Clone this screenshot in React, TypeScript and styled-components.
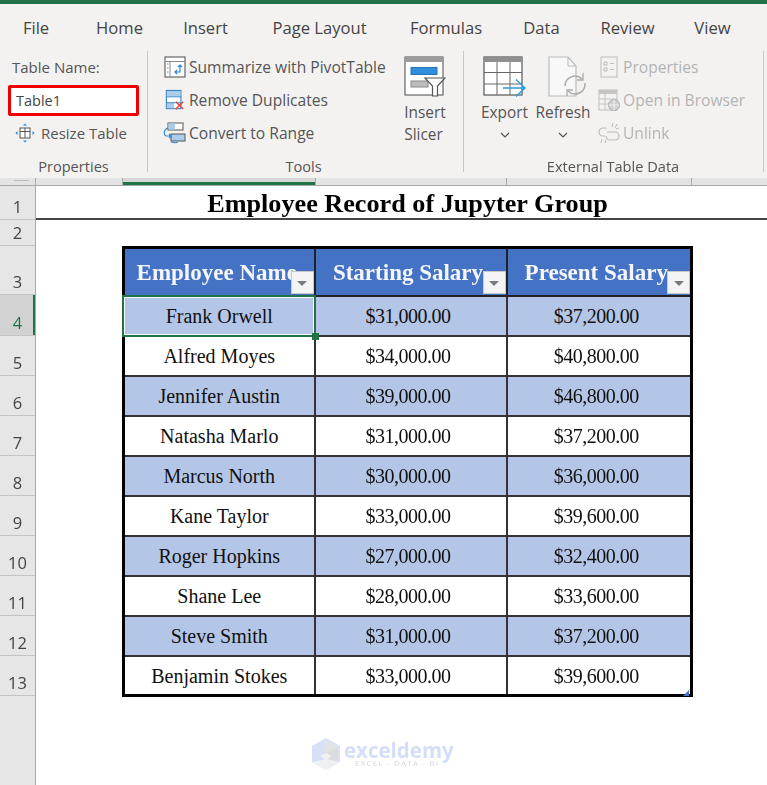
import styled, { createGlobalStyle } from "styled-components";

const GlobalStyle = createGlobalStyle`
  html, body { margin: 0; padding: 0; background: #fff; }
  body { width: 767px; height: 785px; overflow: hidden; font-family: "Open Sans", "Liberation Sans", sans-serif; }
`;

const Page = styled.div`
  width: 767px;
  height: 785px;
  position: relative;
  overflow: hidden;
  display: flex;
  flex-direction: column;
  filter: blur(0.3px);
`;

const Ribbon = styled.div`
  height: 174px;
  border-top: 4px solid #217346;
  background: #f3f2f1;
  flex: none;
`;

const Tabs = styled.div`
  display: flex;
  height: 47px;
  align-items: center;
  font-size: 16.6px;
  color: #444;
`;

const Tab = styled.span<{ $w: number; $before: number }>`
  width: ${(p) => p.$w}px;
  margin-left: ${(p) => p.$before}px;
  white-space: nowrap;
  display: flex;
  justify-content: center;
`;

const Groups = styled.div`
  display: flex;
  height: 127px;
`;

const Group = styled.div<{ $w: number; $pad: number }>`
  width: ${(p) => p.$w}px;
  height: 121px;
  box-sizing: border-box;
  padding-left: ${(p) => p.$pad}px;
  border-right: 1px solid #c8c6c4;
  display: flex;
  flex-direction: column;
  flex: none;
`;

const GroupBody = styled.div`
  display: flex;
  height: 99px;
`;

const GroupLabel = styled.div<{ $shift: number }>`
  margin-left: ${(p) => p.$shift}px;
  height: 22px;
  line-height: 32px;
  text-align: center;
  font-size: 14.6px;
  color: #555;
  white-space: nowrap;
`;

const List = styled.div<{ $w: number; $gap?: number }>`
  width: ${(p) => p.$w}px;
  margin-left: ${(p) => p.$gap ?? 0}px;
  display: flex;
  flex-direction: column;
  flex: none;
`;

const Row = styled.div<{ $off?: boolean }>`
  height: 33px;
  box-sizing: border-box;
  padding-bottom: 1px;
  display: flex;
  align-items: center;
  gap: 3px;
  font-size: 15.6px;
  white-space: nowrap;
  color: ${(p) => (p.$off ? "#b4b4b4" : "#555")};
`;

const IconSlot = styled.span`
  width: 23px;
  flex: none;
  display: flex;
  justify-content: center;
`;

const RibbonIcon = styled.svg`
  flex: none;
  display: block;
`;

const NameLabel = styled.div`
  height: 33px;
  line-height: 32px;
  padding-left: 12px;
  font-size: 15px;
  color: #555;
`;

const NameBox = styled.div`
  width: 131px;
  height: 31px;
  margin: 1px 0 1px 8px;
  box-sizing: border-box;
  border: 3px solid #f00000;
  border-radius: 2px;
  background: #fff;
  padding-left: 5px;
  line-height: 25px;
  font-size: 14.5px;
  color: #444;
`;

const ResizeRow = styled(Row)`
  padding-left: 15px;
  gap: 6px;
  font-size: 15px;
`;

const BigButton = styled.div<{ $w: number }>`
  width: ${(p) => p.$w}px;
  display: flex;
  flex-direction: column;
  align-items: center;
  font-size: 15.4px;
  line-height: 22px;
  color: #555;
  flex: none;
`;

const BigIconSlot = styled.div<{ $nudge?: number }>`
  height: 51px;
  padding-top: 5px;
  margin-left: ${(p) => p.$nudge ?? 0}px;
  box-sizing: border-box;
`;

const Chevron = styled.svg`
  margin-top: 8px;
  display: block;
`;

const ColumnHeaders = styled.div`
  background: #e4e4e4;
  border-bottom: 1px solid #a8a8a8;
  display: flex;
  flex: none;
  height: 7px;
`;

const ColumnHeader = styled.div<{ $w: number; $active?: boolean }>`
  width: ${(p) => p.$w}px;
  box-sizing: border-box;
  border-right: 1px solid #aaa;
  flex: none;
  ${(p) => (p.$active ? "box-shadow: inset 0 -3px 0 #217346; background: #d6d6d6;" : "")}
`;

const CornerHeader = styled(ColumnHeader)`
  display: flex;
  justify-content: flex-end;
  padding: 2px 6px 0 0;
  &::after {
    content: "";
    width: 15px;
    height: 1px;
    background: #bcbcbc;
  }
`;

const Grid = styled.div`
  display: flex;
  flex: 1;
  min-height: 0;
`;

const RowHeaders = styled.div`
  width: 36px;
  flex: none;
  box-sizing: border-box;
  background: #e6e6e6;
  border-right: 1px solid #aaa;
  display: flex;
  flex-direction: column;
`;

const RowHeader = styled.div<{ $h: number; $active?: boolean }>`
  height: ${(p) => p.$h}px;
  box-sizing: border-box;
  flex: none;
  display: flex;
  align-items: flex-end;
  justify-content: center;
  padding-bottom: 1px;
  font-size: 16.5px;
  line-height: 22px;
  color: ${(p) => (p.$active ? "#217346" : "#444")};
  border-bottom: 1px solid #c4c4c4;
  background: ${(p) => (p.$active ? "#d2d2d2" : "transparent")};
  ${(p) => (p.$active ? "box-shadow: inset -2px 0 0 #217346;" : "")}
`;

const Sheet = styled.div`
  flex: 1;
  min-width: 0;
  background: #fff;
  font-family: "Liberation Serif", "Times New Roman", serif;
`;

const Title = styled.div`
  height: 34px;
  box-sizing: border-box;
  border-bottom: 2px solid #444;
  padding-left: 12px;
  text-align: center;
  font-weight: 700;
  font-size: 26.2px;
  line-height: 36px;
  color: #000;
`;

const TableWrap = styled.div`
  margin: 26px 0 0 86px;
  width: 568px;
  position: relative;
`;

const Table = styled.table`
  width: 568px;
  height: 448px;
  table-layout: fixed;
  border-collapse: collapse;
  border: 3px solid #000;
`;

const HeadCell = styled.th<{ $w: number }>`
  width: ${(p) => p.$w}px;
  height: 48px;
  padding: 3px 5px 0 0;
  box-sizing: border-box;
  background: #4472c4;
  color: #f4f6fb;
  border: 2px solid #222;
  font-size: 23px;
  font-weight: 700;
  text-align: center;
  white-space: nowrap;
  overflow: hidden;
  position: relative;
`;

const FilterButton = styled.span`
  position: absolute;
  right: 0;
  bottom: 1px;
  width: 23px;
  height: 23px;
  box-sizing: border-box;
  background: #f4f4f5;
  border: 1px solid #c8c8c8;
  display: flex;
  align-items: center;
  justify-content: center;
  &::after {
    content: "";
    margin-top: 3px;
    border-left: 5px solid transparent;
    border-right: 5px solid transparent;
    border-top: 5px solid #7a7a7a;
  }
`;

const Cell = styled.td<{ $band: boolean; $selected?: boolean; $amount?: boolean }>`
  height: 40px;
  padding: 2px ${(p) => (p.$amount ? "5px" : "0")} 0 0;
  box-sizing: border-box;
  text-align: center;
  font-size: 20px;
  letter-spacing: ${(p) => (p.$amount ? "-0.5px" : "0")};
  color: #111;
  border: 2px solid #333;
  background: ${(p) => (p.$band ? "#b4c6e7" : "#fff")};
  position: relative;
  ${(p) =>
    p.$selected
      ? `
    z-index: 2;
    &::before {
      content: "";
      position: absolute;
      inset: -2px -2px -2px -3px;
      border: 2px solid #217346;
      box-shadow: inset 0 0 0 1px #fff;
    }
    &::after {
      content: "";
      position: absolute;
      right: -5px;
      bottom: -5px;
      width: 7px;
      height: 7px;
      background: #217346;
    }
  `
      : ""}
`;

const ResizeHandle = styled.span`
  position: absolute;
  right: 1px;
  bottom: 1px;
  width: 0;
  height: 0;
  border-left: 6px solid transparent;
  border-bottom: 6px solid #4472c4;
`;

const Watermark = styled.div`
  position: absolute;
  left: 312px;
  top: 738px;
  display: flex;
  gap: 4px;
  align-items: flex-start;
`;

const MarkText = styled.div`
  display: flex;
  flex-direction: column;
  align-items: flex-start;
  padding-top: 2px;
`;

const MarkName = styled.span`
  font-size: 20.5px;
  font-weight: 700;
  line-height: 20px;
  color: #d3def8;
  font-family: "Open Sans", sans-serif;
`;

const MarkTag = styled.span`
  font-size: 8px;
  line-height: 8px;
  letter-spacing: 1.2px;
  margin: -1px 0 0 11px;
  color: #d8d8d8;
  font-family: "Open Sans", sans-serif;
`;

const tabs: [string, number, number][] = [
  ["File", 26, 23],
  ["Home", 47, 47],
  ["Insert", 43, 41],
  ["Page Layout", 97, 44],
  ["Formulas", 72, 42],
  ["Data", 37, 41],
  ["Review", 55, 40],
  ["View", 37, 39],
];

const rows = [
  ["Frank Orwell", "$31,000.00", "$37,200.00"],
  ["Alfred Moyes", "$34,000.00", "$40,800.00"],
  ["Jennifer Austin", "$39,000.00", "$46,800.00"],
  ["Natasha Marlo", "$31,000.00", "$37,200.00"],
  ["Marcus North", "$30,000.00", "$36,000.00"],
  ["Kane Taylor", "$33,000.00", "$39,600.00"],
  ["Roger Hopkins", "$27,000.00", "$32,400.00"],
  ["Shane Lee", "$28,000.00", "$33,600.00"],
  ["Steve Smith", "$31,000.00", "$37,200.00"],
  ["Benjamin Stokes", "$33,000.00", "$39,600.00"],
];

const heads: [string, number][] = [
  ["Employee Name", 191],
  ["Starting Salary", 192],
  ["Present Salary", 185],
];

const rowHeights = [34, 26, 49, 41, 40, 40, 40, 40, 40, 40, 40, 40, 40];

const PivotIcon = () => (
  <RibbonIcon width="22" height="22" viewBox="0 0 22 22" fill="none">
    <rect x="1" y="1" width="20" height="20" fill="#fff" stroke="#666" strokeWidth="1.2" />
    <path d="M1 5.5h20M6 5.5V21" stroke="#888" />
    <path d="M3 8h1.5M3 12h1.5M3 16h1.5" stroke="#888" />
    <path d="M16 10v6h-5M13 14l-2 2 2 2M14 11l2-2 2 2" stroke="#2b88d8" strokeWidth="1.2" />
  </RibbonIcon>
);

const DuplicatesIcon = () => (
  <RibbonIcon width="20" height="24" viewBox="0 0 22 24" fill="none">
    <rect x="1.5" y="1.5" width="16" height="20" fill="#fff" stroke="#2f7fc1" strokeWidth="1.2" />
    <rect x="2" y="2" width="15" height="6" fill="#a9cdec" />
    <rect x="2" y="15" width="8" height="6" fill="#a9cdec" />
    <path d="M1.5 8.5h16M1.5 15h16" stroke="#2f7fc1" />
    <path d="M12 14l8 8M20 14l-8 8" stroke="#e0443e" strokeWidth="1.6" />
  </RibbonIcon>
);

const ConvertIcon = () => (
  <RibbonIcon width="23" height="22" viewBox="0 0 23 22" fill="none">
    <rect x="5" y="1" width="15" height="7" fill="#fff" stroke="#555" />
    <rect x="5.5" y="1.5" width="6.5" height="6" fill="#a9cdec" />
    <rect x="8" y="12" width="14" height="7" fill="#a9cdec" stroke="#555" />
    <path d="M5 6C1 7 0 12 3 14h5M6 12l2 2-2 2M8 20c3 1 5 1 7 0" stroke="#2b88d8" strokeWidth="1.1" />
  </RibbonIcon>
);

const ResizeIcon = () => (
  <RibbonIcon width="20" height="20" viewBox="0 0 20 20" fill="none">
    <rect x="5" y="5" width="10" height="10" fill="#fff" stroke="#555" />
    <path d="M5 8.5h10M10 5v10" stroke="#555" />
    <path d="M10 0.5l-2 2h4zM10 19.5l-2-2h4zM0.5 10l2-2v4zM19.5 10l-2-2v4z" fill="#2b88d8" />
  </RibbonIcon>
);

const SlicerIcon = () => (
  <RibbonIcon width="42" height="42" viewBox="0 0 42 42" fill="none">
    <rect x="1" y="1" width="38" height="38" fill="#fff" stroke="#666" strokeWidth="1.2" />
    <rect x="1" y="1" width="38" height="5" fill="#9b9b9b" />
    <rect x="7" y="11.5" width="26" height="7" fill="#2f8fdd" stroke="#2475b8" />
    <rect x="7" y="25" width="17" height="6" fill="#bdbdbd" stroke="#8a8a8a" />
    <path d="M21 22h20l-7.5 8v10h-5V30z" fill="#fff" stroke="#555" strokeWidth="1.2" />
  </RibbonIcon>
);

const ExportIcon = () => (
  <RibbonIcon width="44" height="42" viewBox="0 0 44 42" fill="none">
    <rect x="1" y="1" width="38" height="38" fill="#fff" stroke="#555" strokeWidth="1.2" />
    <rect x="1" y="1" width="38" height="5" fill="#8f8f8f" />
    <path d="M14 6v33M27 6v33M1 16.5h38M1 28h38" stroke="#666" />
    <path d="M20 32h22M33 23.5l9 8.5-9 8.5" stroke="#2b9be0" strokeWidth="1.4" fill="none" />
  </RibbonIcon>
);

const RefreshIcon = () => (
  <RibbonIcon width="40" height="42" viewBox="0 0 40 42" fill="none">
    <path d="M1 1h19l8 9v30H1z" fill="#f8f8f8" stroke="#bbb" strokeWidth="1.2" />
    <path d="M20 1v9h8" stroke="#bbb" />
    <path d="M17 30a10 10 0 0 1 17-7M37 27a10 10 0 0 1-17 8" stroke="#aaa" strokeWidth="1.5" />
    <path d="M35 17v7h-6M19 40v-6h6" stroke="#aaa" strokeWidth="1.3" />
  </RibbonIcon>
);

const PropertiesIcon = () => (
  <RibbonIcon width="18" height="22" viewBox="0 0 18 22" fill="none">
    <rect x="1" y="1" width="16" height="20" stroke="#bbb" />
    <path d="M4 6h3v3H4zM4 12h3v3H4zM10 7.5h4M10 13.5h4" stroke="#bbb" />
  </RibbonIcon>
);

const BrowserIcon = () => (
  <RibbonIcon width="22" height="22" viewBox="0 0 22 22" fill="none">
    <rect x="1" y="1" width="18" height="20" stroke="#bbb" />
    <rect x="1" y="1" width="18" height="4" fill="#c4c4c4" />
    <path d="M7 5v16M1 10h18M1 15h18" stroke="#c4c4c4" />
    <circle cx="16" cy="16" r="5.5" fill="#d2d2d2" stroke="#aaa" />
    <path d="M10.5 16h11M16 10.5v11" stroke="#f3f2f1" />
  </RibbonIcon>
);

const UnlinkIcon = () => (
  <RibbonIcon width="22" height="22" viewBox="0 0 22 22" fill="none">
    <path d="M9 6H5a4 4 0 0 0 0 8h2M9 10h8a4 4 0 0 1 0 8h-5a4 4 0 0 1-4-4" stroke="#bbb" strokeWidth="1.2" />
    <path d="M15 1l-1 4M19 2l-2 4M21 6l-3 1M4 17l-1 4M8 18l-1 3" stroke="#bbb" />
  </RibbonIcon>
);

const DownChevron = () => (
  <Chevron width="10" height="6" viewBox="0 0 10 6" fill="none">
    <path d="M1 1l4 4 4-4" stroke="#555" strokeWidth="1.2" />
  </Chevron>
);

const Logo = () => (
  <svg width="28" height="32" viewBox="0 0 28 32">
    <path d="M14 0l14 8v16L14 32 0 24V8z" fill="#d6e1f8" />
    <path d="M14 2l12 7-12 7-2-1z" fill="#e2e2e2" />
    <path d="M14 16l12-7v14l-12 7z" fill="#dcdcdc" />
    <path d="M8 18l6-3 6 3-6 4z" fill="#f1f1f1" />
    <path d="M0 24l14 8 14-8-14-3z" fill="#eef1f4" />
  </svg>
);

export default function App() {
  return (
    <Page>
      <GlobalStyle />
      <Ribbon>
        <Tabs>
          {tabs.map(([label, w, before]) => (
            <Tab key={label} $w={w} $before={before}>
              {label}
            </Tab>
          ))}
        </Tabs>
        <Groups>
          <Group $w={148} $pad={0}>
            <GroupBody>
              <List $w={147}>
                <NameLabel>Table Name:</NameLabel>
                <NameBox>Table1</NameBox>
                <ResizeRow>
                  <ResizeIcon />
                  Resize Table
                </ResizeRow>
              </List>
            </GroupBody>
            <GroupLabel $shift={0}>Properties</GroupLabel>
          </Group>
          <Group $w={316} $pad={15}>
            <GroupBody>
              <List $w={241}>
                <Row>
                  <IconSlot>
                    <PivotIcon />
                  </IconSlot>
                  Summarize with PivotTable
                </Row>
                <Row>
                  <IconSlot>
                    <DuplicatesIcon />
                  </IconSlot>
                  Remove Duplicates
                </Row>
                <Row>
                  <IconSlot>
                    <ConvertIcon />
                  </IconSlot>
                  Convert to Range
                </Row>
              </List>
              <BigButton $w={42}>
                <BigIconSlot>
                  <SlicerIcon />
                </BigIconSlot>
                Insert
                <br />
                Slicer
              </BigButton>
            </GroupBody>
            <GroupLabel $shift={-19}>Tools</GroupLabel>
          </Group>
          <Group $w={300} $pad={10}>
            <GroupBody>
              <BigButton $w={61}>
                <BigIconSlot>
                  <ExportIcon />
                </BigIconSlot>
                Export
                <DownChevron />
              </BigButton>
              <BigButton $w={56}>
                <BigIconSlot $nudge={10}>
                  <RefreshIcon />
                </BigIconSlot>
                Refresh
                <DownChevron />
              </BigButton>
              <List $w={170} $gap={6}>
                <Row $off>
                  <IconSlot>
                    <PropertiesIcon />
                  </IconSlot>
                  Properties
                </Row>
                <Row $off>
                  <IconSlot>
                    <BrowserIcon />
                  </IconSlot>
                  Open in Browser
                </Row>
                <Row $off>
                  <IconSlot>
                    <UnlinkIcon />
                  </IconSlot>
                  Unlink
                </Row>
              </List>
            </GroupBody>
            <GroupLabel $shift={-11}>External Table Data</GroupLabel>
          </Group>
        </Groups>
      </Ribbon>
      <ColumnHeaders>
        <CornerHeader $w={36} />
        <ColumnHeader $w={87} />
        <ColumnHeader $w={193} $active />
        <ColumnHeader $w={191} />
        <ColumnHeader $w={185} />
      </ColumnHeaders>
      <Grid>
        <RowHeaders>
          {rowHeights.map((h, i) => (
            <RowHeader key={i} $h={h} $active={i === 3}>
              {i + 1}
            </RowHeader>
          ))}
        </RowHeaders>
        <Sheet>
          <Title>Employee Record of Jupyter Group</Title>
          <TableWrap>
            <Table>
              <thead>
                <tr>
                  {heads.map(([label, w]) => (
                    <HeadCell key={label} $w={w}>
                      {label}
                      <FilterButton />
                    </HeadCell>
                  ))}
                </tr>
              </thead>
              <tbody>
                {rows.map((row, i) => (
                  <tr key={row[0]}>
                    {row.map((value, j) => (
                      <Cell key={j} $band={i % 2 === 0} $amount={j > 0} $selected={i === 0 && j === 0}>
                        {value}
                      </Cell>
                    ))}
                  </tr>
                ))}
              </tbody>
            </Table>
            <ResizeHandle />
          </TableWrap>
        </Sheet>
      </Grid>
      <Watermark>
        <Logo />
        <MarkText>
          <MarkName>exceldemy</MarkName>
          <MarkTag>EXCEL - DATA - BI</MarkTag>
        </MarkText>
      </Watermark>
    </Page>
  );
}
